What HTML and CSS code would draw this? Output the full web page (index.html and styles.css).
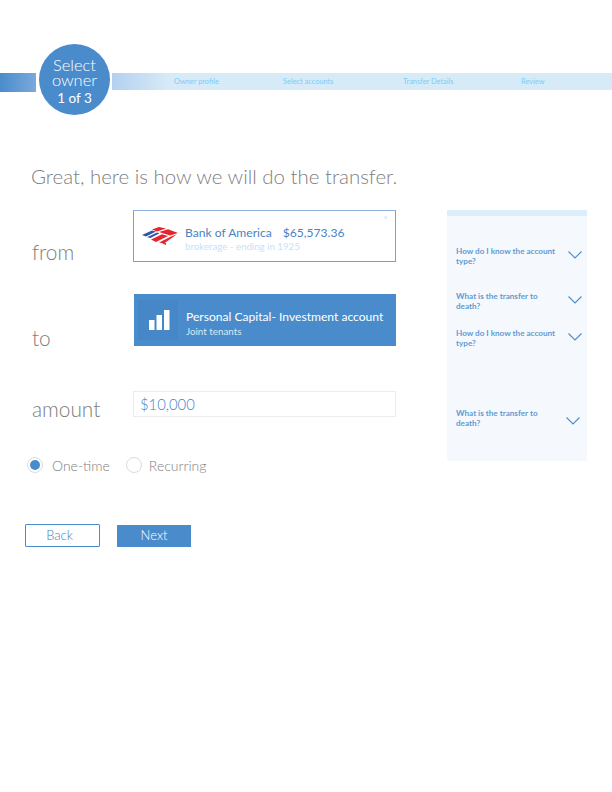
FILE: index.html
```html
<!DOCTYPE html>
<html lang="en">
<head>
<meta charset="utf-8">
<title>Transfer</title>
<link rel="stylesheet" href="styles.css">
</head>
<body>
<header class="stepper">
  <div class="bar-left"></div>
  <div class="badge"><span class="badge-light">Select</span><span class="badge-light">owner</span><span class="badge-count">1 of 3</span></div>
  <nav class="bar-right">
    <span class="step step-1">Owner profile</span>
    <span class="step step-2">Select accounts</span>
    <span class="step step-3">Transfer Details</span>
    <span class="step">Review</span>
  </nav>
</header>
<h1 class="title">Great, here is how we will do the transfer.</h1>
<main class="content">
  <section class="form">
    <div class="row row-from">
      <span class="label">from</span>
      <div class="card card-from">
        <svg class="boa" viewBox="0 0 36 18" width="36" height="18">
          <path fill="#2f55a8" d="M0 8 L10 3.6 L14 4.6 L4 9.4Z M5 10.2 L15 5.4 L17.5 6.2 L8.5 11Z"/>
          <path fill="#e3262e" d="M10 2.6 L17 0 L24 1.6 L15 4.6Z M17 5 L26 2.2 L36 6 L28 8.4Z M9 12.4 L20 7.2 L26 9 L14 15Z M17 15.4 L29 9.6 L35 7.2 L22 16.6Z M20 16.4 L24 18 L24 16Z"/>
        </svg>
        <div class="card-text">
          <div class="boa-name"><span>Bank of America</span><span>$65,573.36</span></div>
          <div class="boa-sub">brokerage - ending in 1925</div>
        </div>
        <span class="card-close">×</span>
      </div>
    </div>
    <div class="row row-to">
      <span class="label">to</span>
      <div class="card card-to">
        <div class="icon-tile">
          <svg viewBox="0 0 21 20" width="21" height="20"><path fill="#fff" d="M0 10h5.5v10H0z M7.5 5h5.5v15H7.5z M15 0h5.5v20H15z"/></svg>
        </div>
        <div class="card-text">
          <div class="pc-name">Personal Capital- Investment account</div>
          <div class="pc-sub">Joint tenants</div>
        </div>
      </div>
    </div>
    <div class="row row-amount">
      <span class="label">amount</span>
      <div class="amount-field">$10,000</div>
    </div>
    <div class="radios">
      <span class="radio radio-on"></span><span class="radio-text radio-text-first">One-time</span>
      <span class="radio"></span><span class="radio-text">Recurring</span>
    </div>
    <div class="actions">
      <button class="btn btn-back" type="button">Back</button>
      <button class="btn btn-next" type="button">Next</button>
    </div>
  </section>
  <aside class="faq">
    <div class="faq-item"><span>How do I know the account type?</span><svg class="chev" viewBox="0 0 14 8" width="14" height="8"><path d="M.5.5 7 7 13.5.5" fill="none" stroke="#4a8ccb" stroke-width="1.1"/></svg></div>
    <div class="faq-item faq-2"><span>What is the transfer to death?</span><svg class="chev" viewBox="0 0 14 8" width="14" height="8"><path d="M.5.5 7 7 13.5.5" fill="none" stroke="#4a8ccb" stroke-width="1.1"/></svg></div>
    <div class="faq-item faq-3"><span>How do I know the account type?</span><svg class="chev" viewBox="0 0 14 8" width="14" height="8"><path d="M.5.5 7 7 13.5.5" fill="none" stroke="#4a8ccb" stroke-width="1.1"/></svg></div>
    <div class="faq-item faq-4"><span>What is the transfer to death?</span><svg class="chev" viewBox="0 0 14 8" width="14" height="8"><path d="M.5.5 7 7 13.5.5" fill="none" stroke="#4a8ccb" stroke-width="1.1"/></svg></div>
  </aside>
</main>
</body>
</html>
```
FILE: styles.css
```css
* { box-sizing: border-box; }
html, body { margin: 0; padding: 0; background: #fff; }
body { width: 612px; height: 792px; overflow: hidden; padding-top: 44px; font-family: Lato, "Open Sans", sans-serif; }

.stepper { display: flex; align-items: flex-start; height: 72px; }
.bar-left { width: 36px; height: 19px; margin-top: 29px; background: linear-gradient(90deg, #4a8ccb, #7aa9dc); flex: none; }
.badge { flex: none; width: 71px; height: 71px; margin: 0 2px 0 3px; border-radius: 50%; background: #4a8ccb; color: #fff; display: flex; flex-direction: column; align-items: center; justify-content: center; padding-top: 7px; }
.badge-light { display: block; font-size: 16.5px; font-weight: 300; line-height: 15px; }
.badge-count { display: block; font-size: 13.5px; font-weight: 400; line-height: 20px; }
.bar-right { flex: 1; height: 17px; margin-top: 29px; display: flex; align-items: center; padding-left: 62px; background: linear-gradient(90deg, #b4d0ee 0, #d6eaf7 55px); }
.step { font-size: 7.4px; color: #7acdf9; white-space: nowrap; }
.step-1 { width: 109px; }
.step-2 { width: 120px; }
.step-3 { width: 118px; }

.title { margin: 0 0 0 31px; font-size: 20.45px; font-weight: 300; line-height: 28px; color: #808080; white-space: nowrap; padding-top: 46px; }

.content { display: flex; padding-top: 20px; }
.form { width: 447px; flex: none; }
.row { display: grid; grid-template-columns: 101px 263px; padding-left: 32px; align-items: end; }
.label { font-size: 20.8px; font-weight: 300; color: #7d7d7d; line-height: 26px; }
.row-from { height: 52px; }
.row-from .label { margin-bottom: -3px; }
.row-to { height: 52px; margin-top: 32px; }
.row-to .label { margin-bottom: -5px; }
.row-amount { height: 26px; margin-top: 45px; }
.row-amount .label { margin-bottom: -5px; }

.card { display: flex; align-items: center; position: relative; }
.card-from { height: 52px; border: 1px solid #7f9ec9; border-top-color: #8fb2e0; background: #fff; padding-left: 8px; gap: 7px; }
.boa { flex: none; }
.card-text { min-width: 0; padding-top: 4px; }
.boa-name { display: flex; gap: 11px; font-size: 12.1px; color: #4a82c4; line-height: 15px; }
.boa-sub { font-size: 9.7px; color: #c7e2f7; line-height: 11px; margin-top: 1px; }
.card-close { position: absolute; top: 2px; right: 7px; font-size: 8px; line-height: 8px; color: #c7e2f7; }
.card-to { height: 52px; margin-left: 1px; background: #4a8ccb; padding-left: 4px; gap: 8px; }
.card-to .card-text { padding-top: 5px; }
.icon-tile { width: 40px; height: 40px; flex: none; display: flex; align-items: center; justify-content: center; padding-left: 2px; background: #4587c7; }
.pc-name { font-size: 12.1px; color: #fff; line-height: 15px; white-space: nowrap; }
.pc-sub { font-size: 9.8px; color: #d8e8f6; line-height: 12px; margin-top: 1px; }
.amount-field { height: 26px; border: 1px solid #ececec; padding-left: 6px; font-size: 14.8px; font-weight: 300; line-height: 24px; color: #3f84c8; }

.radios { display: flex; align-items: center; margin: 40px 0 0 27px; height: 16px; }
.radio { width: 16px; height: 16px; flex: none; border: 1px solid #dcdcdc; border-radius: 50%; background: #fff; position: relative; }
.radio-on::after { content: ""; position: absolute; left: 2px; top: 2px; width: 10px; height: 10px; border-radius: 50%; background: #4a8ccb; }
.radio-text { font-size: 14px; font-weight: 300; color: #808080; margin-left: 7px; }
.radio-text-first { margin-left: 9px; margin-right: 16px; }

.actions { display: flex; margin: 51px 0 0 25px; gap: 17px; align-items: center; }
.btn { font: 300 13px Lato, sans-serif; height: 22px; padding: 0 0 2px; cursor: pointer; }
.btn-back { width: 75px; height: 23px; padding-right: 6px; background: #fff; color: #3f7fc2; border: 1px solid #4a8ccb; border-radius: 1px; }
.btn-next { width: 74px; background: #4a8ccb; color: #fff; border: 0; }

.faq { width: 140px; height: 251px; flex: none; background: #f5f9fd; border-top: 6px solid #dceefb; display: flex; flex-direction: column; padding: 30px 0 0 9px; }
.faq-item { width: 126px; display: flex; justify-content: space-between; align-items: center; font-size: 8.15px; font-weight: 700; color: #5f99d2; line-height: 10px; }
.faq-item span { width: 106px; }
.chev { margin-bottom: 2px; flex: none; }
.faq-2 { margin-top: 25px; }
.faq-3 { margin-top: 17px; }
.faq-4 { margin-top: 60px; }
.faq-4 .chev { margin: 6px 2px 0 0; }
```
